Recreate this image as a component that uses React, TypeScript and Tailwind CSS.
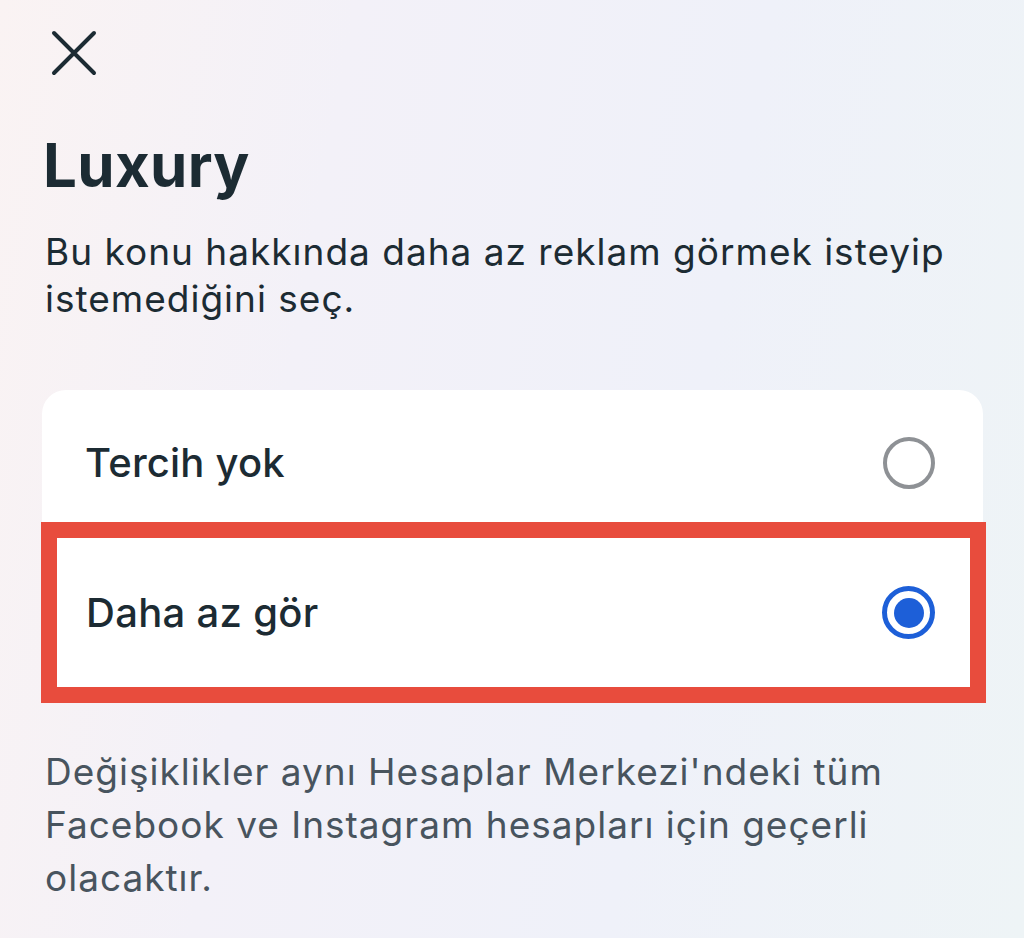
export default function App() {
  return (
    <div className="h-[938px] w-full overflow-hidden bg-[linear-gradient(100deg,#faf3f3_0%,#f3f1f8_30%,#eff1f9_65%,#eef4f6_100%)] font-['Inter','Noto_Sans',sans-serif] text-[#1c2b33]">
      <div className="pl-[45px] pr-[38px] pt-[29px]">
        {/* close */}
        <button className="ml-[5px] block h-12 w-12" aria-label="Kapat">
          <svg viewBox="0 0 48 48" className="h-12 w-12" fill="none" stroke="#1c2b33" strokeWidth="4" strokeLinecap="round">
            <path d="M4 4 L44 44 M44 4 L4 44" />
          </svg>
        </button>

        <h1 className="-ml-[2px] mt-[52px] text-[60px] font-bold leading-[72px] tracking-[0.3px]">Luxury</h1>
        <p className="mt-[27px] text-[37px] leading-[47px] tracking-[1px]">
          Bu konu hakkında daha az reklam görmek isteyip istemediğini seç.
        </p>

        {/* options */}
        <div className="-ml-[3px] mr-[3px] mt-[68px] rounded-t-[24px] bg-white">
          <div className="flex h-[132px] items-center justify-between pl-[43px] pr-[48px] pt-[14px]">
            <span className="text-[40px] font-medium tracking-[0.2px]">Tercih yok</span>
            <span className="h-[52px] w-[52px] rounded-full border-[4.5px] border-[#8e9195]" />
          </div>
          <div className="-ml-[1px] -mr-[3px] flex h-[181px] items-center justify-between border-[16px] border-[#e84c3d] bg-white pl-[29px] pr-[35px]">
            <span className="text-[40px] font-medium tracking-[0.3px]">Daha az gör</span>
            <span className="flex h-[53px] w-[53px] items-center justify-center rounded-full border-[5px] border-[#1d5fd8]">
              <span className="h-[30px] w-[30px] rounded-full bg-[#1d5fd8]" />
            </span>
          </div>
        </div>

        <p className="mt-[42px] text-[37px] leading-[53px] tracking-[1px] text-[#48545e]">
          Değişiklikler aynı Hesaplar Merkezi'ndeki tüm Facebook ve Instagram hesapları için geçerli olacaktır.
        </p>
      </div>
    </div>
  );
}
